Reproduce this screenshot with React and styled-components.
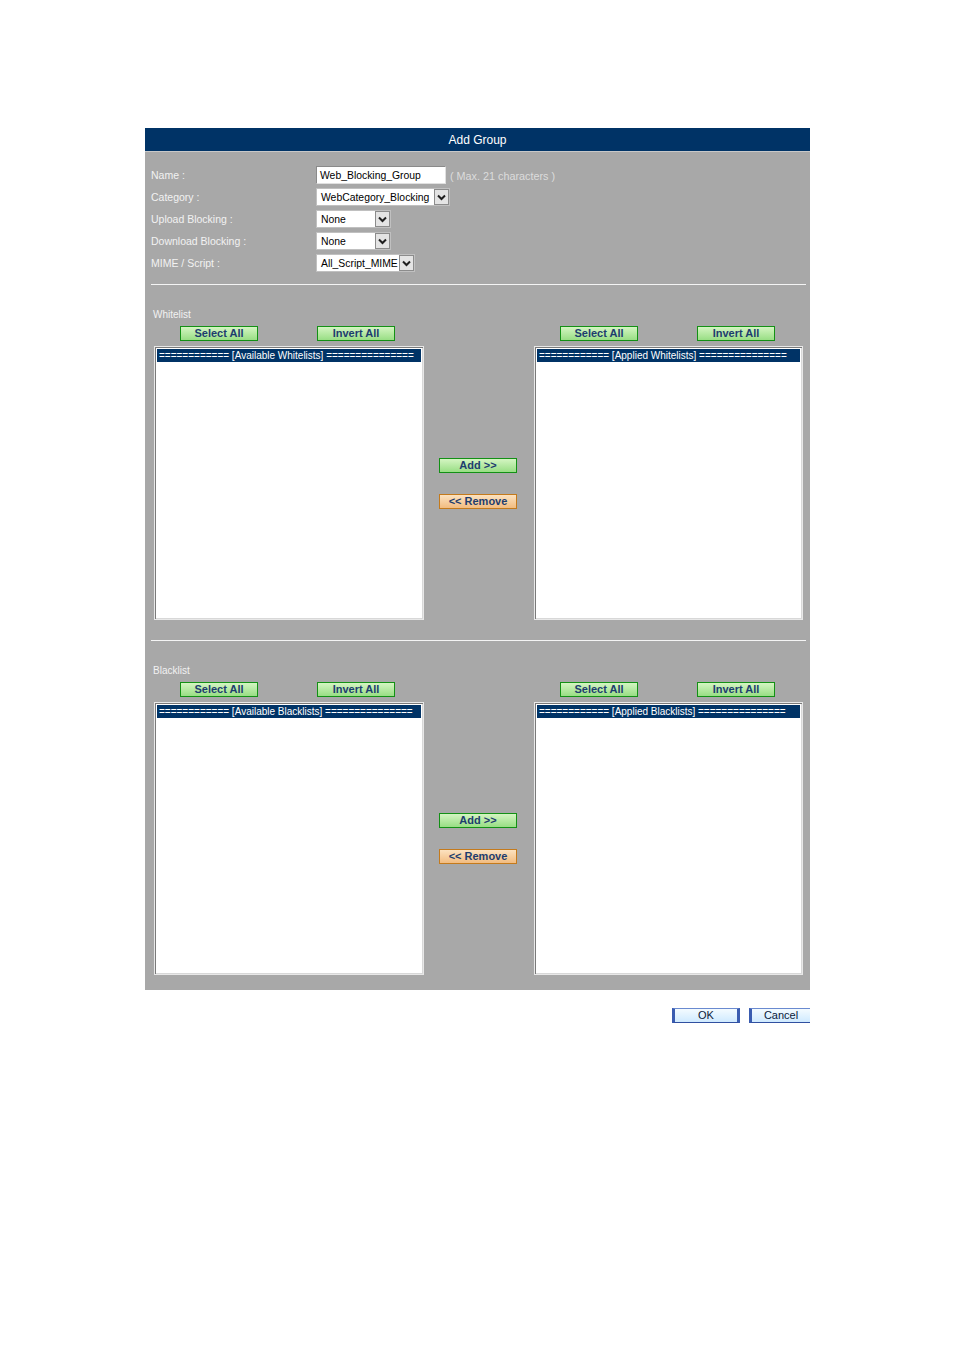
import React from "react";
import styled, { createGlobalStyle } from "styled-components";

const GlobalStyle = createGlobalStyle`
  body {
    margin: 0;
    background: #ffffff;
    font-family: "Liberation Sans", Arial, sans-serif;
  }
`;

const Page = styled.div`
  width: 954px;
  height: 1350px;
  padding-top: 128px;
  box-sizing: border-box;
`;

const Panel = styled.div`
  width: 665px;
  margin-left: 145px;
  background: #a8a8a8;
`;

const Header = styled.div`
  height: 23px;
  background: #003366;
  border-bottom: 1px solid #c8c8c8;
  color: #ffffff;
  font-size: 12px;
  line-height: 24px;
  text-align: center;
`;

const Body = styled.div`
  padding: 14px 4px 15px 6px;
`;

const Form = styled.div`
  display: flex;
  flex-direction: column;
  gap: 4px;
`;

const Row = styled.div`
  display: grid;
  grid-template-columns: 165px 1fr;
  align-items: center;
  height: 18px;
`;

const Label = styled.div`
  color: #f2f2f2;
  font-size: 10.5px;
`;

const Field = styled.div`
  display: flex;
  align-items: center;
`;

const TextBox = styled.div`
  width: 130px;
  height: 18px;
  box-sizing: border-box;
  background: #ffffff;
  border: 1px solid #8a8a8a;
  border-right-color: #e0e0e0;
  border-bottom-color: #e0e0e0;
  font-size: 10.4px;
  line-height: 17px;
  padding-left: 3px;
  color: #000000;
`;

const Hint = styled.span`
  margin-left: 4px;
  margin-top: 2px;
  color: #dcdcdc;
  font-size: 10.8px;
`;

const Select = styled.div`
  display: flex;
  width: ${(p) => p.w}px;
  height: 18px;
  box-sizing: border-box;
  background: #ffffff;
  border: 1px solid #c0c0c0;
`;

const SelectText = styled.div`
  flex: 1;
  font-size: 10.4px;
  line-height: 17px;
  padding-left: 4px;
  color: #000000;
  white-space: nowrap;
  overflow: hidden;
`;

const Arrow = styled.div`
  width: 15px;
  height: 16px;
  box-sizing: border-box;
  background: #e4e4e4;
  border: 1px solid #8c8c8c;
  display: flex;
  align-items: center;
  justify-content: center;
`;

const Divider = styled.div`
  height: 1px;
  background: #f4f4f4;
  margin: ${(p) => p.m};
`;

const SectionTitle = styled.div`
  color: #f2f2f2;
  font-size: 10px;
  padding-left: 2px;
  height: 13px;
  line-height: 13px;
`;

const Lists = styled.div`
  display: grid;
  grid-template-columns: 270px 110px 269px;
  padding-left: 3px;
  margin-top: 5px;
`;

const ListColumn = styled.div`
  display: flex;
  flex-direction: column;
  gap: 5px;
`;

const ButtonPair = styled.div`
  display: flex;
  gap: 59px;
  padding-left: 26px;
`;

const ActionButton = styled.div`
  width: 78px;
  height: 15px;
  box-sizing: border-box;
  border: 1px solid ${(p) => (p.orange ? "#c47a1c" : "#139015")};
  background: ${(p) =>
    p.orange
      ? "linear-gradient(#fce2c0, #f2bc80)"
      : "linear-gradient(#d4f5c2, #98de84)"};
  color: #1d3d6e;
  font-size: 11px;
  font-weight: bold;
  line-height: 13px;
  text-align: center;
  white-space: nowrap;
`;

const ListBox = styled.div`
  height: ${(p) => p.h}px;
  box-sizing: border-box;
  background: #ffffff;
  border: 1px solid #e8e8e8;
  box-shadow: inset 1px 1px 0 #7a7a7a, inset -1px -1px 0 #d8d8d8;
  padding: 2px;
`;

const ListHead = styled.div`
  background: #003366;
  color: #ffffff;
  font-size: 10px;
  line-height: 13px;
  height: 13px;
  padding-left: 2px;
  white-space: nowrap;
  overflow: hidden;
`;

const Mover = styled.div`
  display: flex;
  flex-direction: column;
  align-items: center;
  justify-content: center;
  gap: 21px;
  padding: 20px 2px 0 0;
`;

const Footer = styled.div`
  width: 665px;
  margin: 18px 0 0 145px;
  display: flex;
  justify-content: flex-end;
  gap: 9px;
`;

const DialogButton = styled.div`
  width: ${(p) => p.w}px;
  height: 15px;
  box-sizing: border-box;
  background: linear-gradient(#f4fbff, #cfeaff);
  border-top: 1px solid #6a8ad0;
  border-bottom: 1px solid #3050a0;
  border-left: 3px solid #3a5cb0;
  border-right: ${(p) => (p.open ? "none" : "3px solid #3a5cb0")};
  color: #0a1a3a;
  font-size: 11px;
  line-height: 13px;
  text-align: center;
`;

const Chevron = () => (
  <svg width="9" height="7" viewBox="0 0 9 7">
    <path d="M1 1.5 L4.5 5 L8 1.5" fill="none" stroke="#202020" strokeWidth="2" />
  </svg>
);

const Dropdown = ({ w, value }) => (
  <Select w={w}>
    <SelectText>{value}</SelectText>
    <Arrow>
      <Chevron />
    </Arrow>
  </Select>
);

const ListSection = ({ title, available, applied, height }) => (
  <>
    <SectionTitle>{title}</SectionTitle>
    <Lists>
      <ListColumn>
        <ButtonPair>
          <ActionButton>Select All</ActionButton>
          <ActionButton>Invert All</ActionButton>
        </ButtonPair>
        <ListBox h={height}>
          <ListHead>============ [{available}] ===============</ListHead>
        </ListBox>
      </ListColumn>
      <Mover>
        <ActionButton>Add &gt;&gt;</ActionButton>
        <ActionButton orange>&lt;&lt; Remove</ActionButton>
      </Mover>
      <ListColumn>
        <ButtonPair>
          <ActionButton>Select All</ActionButton>
          <ActionButton>Invert All</ActionButton>
        </ButtonPair>
        <ListBox h={height}>
          <ListHead>============ [{applied}] ===============</ListHead>
        </ListBox>
      </ListColumn>
    </Lists>
  </>
);

const App = () => {
  return (
    <Page>
      <GlobalStyle />
      <Panel>
        <Header>Add Group</Header>
        <Body>
          <Form>
            <Row>
              <Label>Name :</Label>
              <Field>
                <TextBox>Web_Blocking_Group</TextBox>
                <Hint>( Max. 21 characters )</Hint>
              </Field>
            </Row>
            <Row>
              <Label>Category :</Label>
              <Field>
                <Dropdown w={134} value="WebCategory_Blocking" />
              </Field>
            </Row>
            <Row>
              <Label>Upload Blocking :</Label>
              <Field>
                <Dropdown w={75} value="None" />
              </Field>
            </Row>
            <Row>
              <Label>Download Blocking :</Label>
              <Field>
                <Dropdown w={75} value="None" />
              </Field>
            </Row>
            <Row>
              <Label>MIME / Script :</Label>
              <Field>
                <Dropdown w={99} value="All_Script_MIME" />
              </Field>
            </Row>
          </Form>
          <Divider m="12px 0 23px 0" />
          <ListSection
            title="Whitelist"
            available="Available Whitelists"
            applied="Applied Whitelists"
            height={274}
          />
          <Divider m="20px 0 23px 0" />
          <ListSection
            title="Blacklist"
            available="Available Blacklists"
            applied="Applied Blacklists"
            height={273}
          />
        </Body>
      </Panel>
      <Footer>
        <DialogButton w={68}>OK</DialogButton>
        <DialogButton w={61} open>
          Cancel
        </DialogButton>
      </Footer>
    </Page>
  );
};

export default App;
